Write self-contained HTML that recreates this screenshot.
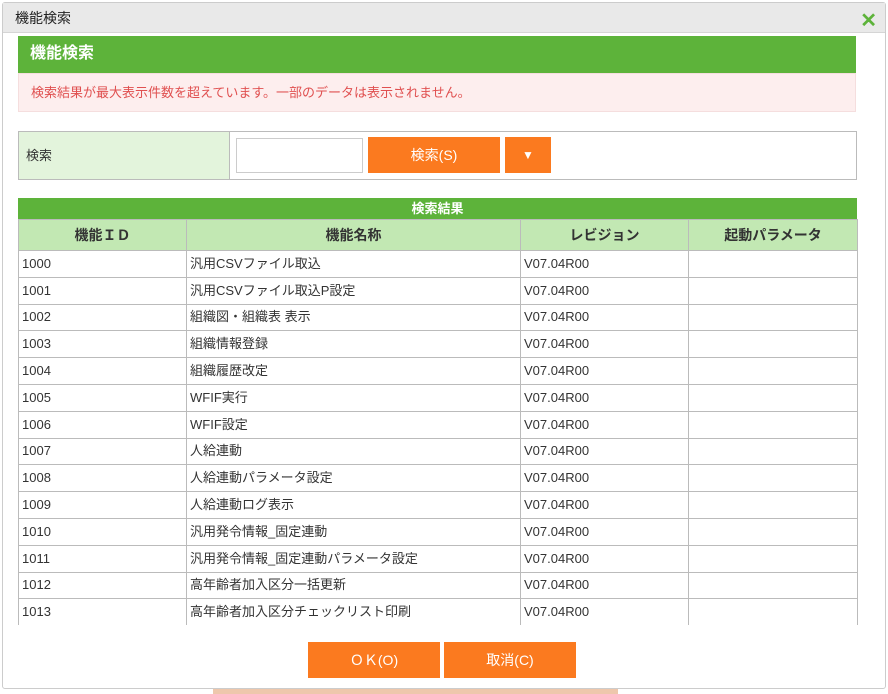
<!DOCTYPE html>
<html><head><meta charset="utf-8"><style>
*{box-sizing:border-box;margin:0;padding:0}
body{width:888px;height:694px;background:#fff;font-family:"Liberation Sans","Noto Sans CJK JP",sans-serif;font-size:13px;color:#333;position:relative;overflow:hidden}
.dlg{position:absolute;left:2px;top:2px;width:884px;height:687px;border:1px solid #ccc;border-radius:3px;background:#fff}
.title{position:absolute;left:0;top:0;width:882px;height:30px;background:#e9e9e9;border-bottom:1px solid #d5d5d5;font-size:14px;line-height:30px;padding-left:12px;color:#222}
.x{position:absolute;right:8px;top:3px;color:#5db33a;font-size:20px;font-weight:bold}
.abs{position:absolute}
.gh{left:18px;top:36px;width:838px;height:37px;background:#5db33a;color:#fff;font-weight:bold;font-size:16px;line-height:36px;padding-left:12px}
.msg{left:18px;top:73px;width:838px;height:39px;background:#fdeeee;border:1px solid #f5dede;color:#e05050;line-height:38px;padding-left:12px}
.sbox{left:18px;top:131px;width:839px;height:49px;border:1px solid #bbb}
.lbl{left:0;top:0;width:211px;height:47px;background:#e3f4dc;border-right:1px solid #bbb;line-height:47px;padding-left:7px}
.inp{left:236px;top:138px;width:127px;height:35px;border:1px solid #ccc}
.btn{background:#fb7a1f;color:#fff;text-align:center;font-size:14px}
table{position:absolute;left:18px;top:219px;width:839px;border-collapse:collapse;table-layout:fixed}
td,th{border:1px solid #bbb;height:26.8px;padding:0 3px;white-space:nowrap;overflow:hidden;font-weight:normal;vertical-align:middle;line-height:14px}
th{background:#c2e8b3;font-weight:bold;height:31px;font-size:14px}
</style></head><body>
<div class="abs" style="left:213px;top:689px;width:405px;height:5px;background:#eec7ac"></div>
<div class="dlg">
<div class="title">機能検索<span class="x">✕</span></div>
</div>
<div class="abs gh">機能検索</div>
<div class="abs msg">検索結果が最大表示件数を超えています。一部のデータは表示されません。</div>
<div class="abs sbox"><div class="abs lbl">検索</div></div>
<div class="abs inp"></div>
<div class="abs btn" style="left:368px;top:137px;width:132px;height:36px;line-height:36px">検索(S)</div>
<div class="abs btn" style="left:505px;top:137px;width:46px;height:36px;line-height:36px;font-size:12px">▼</div>
<div class="abs" style="left:18px;top:198px;width:839px;height:21px;background:#5db33a;color:#fff;font-weight:bold;text-align:center;line-height:21px">検索結果</div>
<div class="abs" style="left:0;top:219px;width:888px;height:406px;overflow:hidden">
<table style="top:0">
<colgroup><col style="width:168px"><col style="width:334px"><col style="width:168px"><col style="width:169px"></colgroup>
<tr><th>機能ＩＤ</th><th>機能名称</th><th>レビジョン</th><th>起動パラメータ</th></tr>
<tr><td>1000</td><td>汎用CSVファイル取込</td><td>V07.04R00</td><td></td></tr>
<tr><td>1001</td><td>汎用CSVファイル取込P設定</td><td>V07.04R00</td><td></td></tr>
<tr><td>1002</td><td>組織図・組織表 表示</td><td>V07.04R00</td><td></td></tr>
<tr><td>1003</td><td>組織情報登録</td><td>V07.04R00</td><td></td></tr>
<tr><td>1004</td><td>組織履歴改定</td><td>V07.04R00</td><td></td></tr>
<tr><td>1005</td><td>WFIF実行</td><td>V07.04R00</td><td></td></tr>
<tr><td>1006</td><td>WFIF設定</td><td>V07.04R00</td><td></td></tr>
<tr><td>1007</td><td>人給連動</td><td>V07.04R00</td><td></td></tr>
<tr><td>1008</td><td>人給連動パラメータ設定</td><td>V07.04R00</td><td></td></tr>
<tr><td>1009</td><td>人給連動ログ表示</td><td>V07.04R00</td><td></td></tr>
<tr><td>1010</td><td>汎用発令情報_固定連動</td><td>V07.04R00</td><td></td></tr>
<tr><td>1011</td><td>汎用発令情報_固定連動パラメータ設定</td><td>V07.04R00</td><td></td></tr>
<tr><td>1012</td><td>高年齢者加入区分一括更新</td><td>V07.04R00</td><td></td></tr>
<tr><td>1013</td><td>高年齢者加入区分チェックリスト印刷</td><td>V07.04R00</td><td></td></tr>
<tr><td>1014</td><td></td><td></td><td></td></tr>
</table></div>
<div class="abs btn" style="left:308px;top:642px;width:132px;height:36px;line-height:36px">ＯＫ(O)</div>
<div class="abs btn" style="left:444px;top:642px;width:132px;height:36px;line-height:36px">取消(C)</div>
</body></html>
